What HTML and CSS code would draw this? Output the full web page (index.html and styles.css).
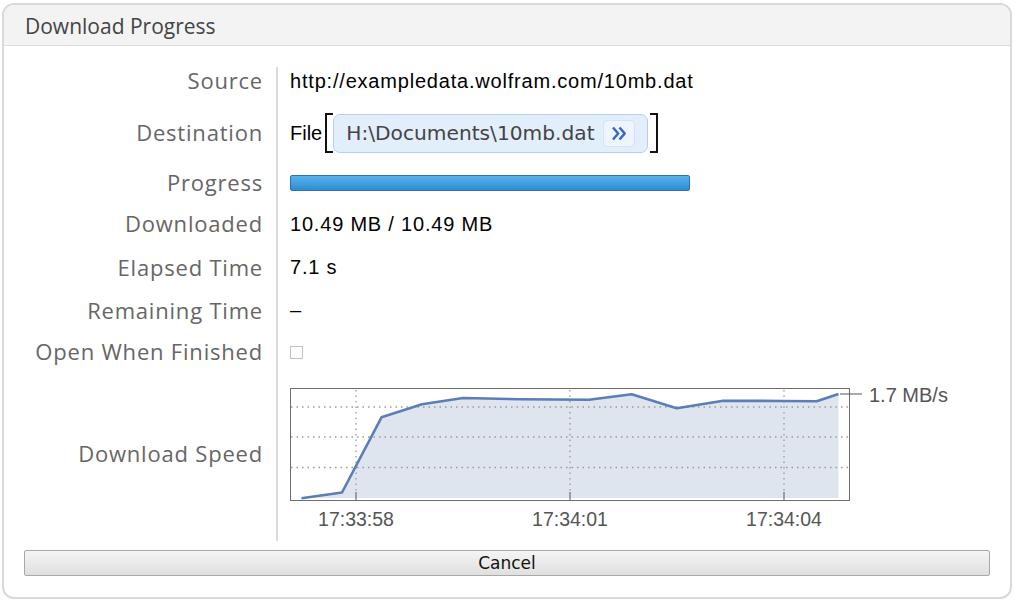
FILE: index.html
```html
<!DOCTYPE html>
<html lang="en">
<head>
  <meta charset="UTF-8" />
  <meta name="viewport" content="width=device-width, initial-scale=1.0"/>
  <title>Download Progress</title>
  <link rel="stylesheet" href="styles.css">
</head>
<body>

<div class="dialog">
  <div class="dialog-title">Download Progress</div>

  <div class="dialog-body">
    <div class="fields">
      <div class="divider"></div>

      <div class="label">Source</div>
      <div class="value">http://exampledata.wolfram.com/10mb.dat</div>

      <div class="label">Destination</div>
      <div class="value file-value">
        <span class="file-head">File</span>
        <span class="bracket bracket-open"></span>
        <span class="file-box">
          <span class="file-path">H:\Documents\10mb.dat</span>
          <span class="file-btn">
            <svg width="16" height="15" viewBox="0 0 16 15">
              <path d="M2 1.5 L7.2 7.5 L2 13.5 M8.5 1.5 L13.7 7.5 L8.5 13.5" fill="none" stroke="#3b68c6" stroke-width="2.6" stroke-linejoin="round"/>
            </svg>
          </span>
        </span>
        <span class="bracket bracket-close"></span>
      </div>

      <div class="label label-progress">Progress</div>
      <div class="value"><div class="progress-bar"></div></div>

      <div class="label">Downloaded</div>
      <div class="value">10.49 MB / 10.49 MB</div>

      <div class="label">Elapsed Time</div>
      <div class="value">7.1 s</div>

      <div class="label">Remaining Time</div>
      <div class="value">&ndash;</div>

      <div class="label">Open When Finished</div>
      <div class="value"><span class="checkbox"></span></div>

      <div class="label label-speed">Download Speed</div>
      <div class="value speed-value">
        <!-- speed history, one point per sample -->
        <svg class="speed-chart" width="680" height="170" viewBox="0 0 680 170">
          <polygon fill="#dfe5ef" points="11.5,127.3 52,121.5 91.5,46.3 132,33.3 173,27 230,28.3 299,28.8 341.7,23.3 386.7,37.3 433.3,29.7 491,30 526.7,30.3 548.5,23 548.5,127 11.5,127"/>
          <g stroke="#9a9a9a" stroke-width="1.3" stroke-dasharray="1.5 4">
            <line x1="1" y1="36" x2="559" y2="36"/>
            <line x1="1" y1="66" x2="559" y2="66"/>
            <line x1="1" y1="96.5" x2="559" y2="96.5"/>
            <line x1="66" y1="19" x2="66" y2="121"/>
            <line x1="280" y1="19" x2="280" y2="121"/>
            <line x1="494" y1="19" x2="494" y2="121"/>
          </g>
          <g stroke="#555" stroke-width="1">
            <line x1="66" y1="121" x2="66" y2="129"/>
            <line x1="280" y1="121" x2="280" y2="129"/>
            <line x1="494" y1="121" x2="494" y2="129"/>
          </g>
          <polyline fill="none" stroke="#5b7db8" stroke-width="2.6" stroke-linejoin="round" points="11.5,127.3 52,121.5 91.5,46.3 132,33.3 173,27 230,28.3 299,28.8 341.7,23.3 386.7,37.3 433.3,29.7 491,30 526.7,30.3 548.5,23"/>
          <rect x="0.5" y="17.5" width="559" height="112" fill="none" stroke="#6e6e6e" stroke-width="1"/>
          <line x1="550" y1="23" x2="572" y2="23" stroke="#555" stroke-width="1"/>
          <g class="axis-text">
            <text x="66" y="155" text-anchor="middle">17:33:58</text>
            <text x="280" y="155" text-anchor="middle">17:34:01</text>
            <text x="494" y="155" text-anchor="middle">17:34:04</text>
            <text x="579" y="31" class="rate">1.7 MB/s</text>
          </g>
        </svg>
      </div>
    </div>

    <button class="cancel-btn">Cancel</button>
  </div>
</div>

</body>
</html>
```

FILE: styles.css
```css
body {
  margin: 0;
  background: #fff;
}
.dialog {
  box-sizing: border-box;
  width: 1010px;
  height: 596px;
  margin: 3px 2px 0;
  border: 2px solid #d9d9d9;
  border-radius: 12px;
  overflow: hidden;
  display: flex;
  flex-direction: column;
}
.dialog-title {
  height: 40px;
  background: #f3f3f3;
  border-bottom: 1px solid #dcdcdc;
  padding-left: 21px;
  font-family: "Open Sans", sans-serif;
  font-size: 21px;
  line-height: 42px;
  color: #444;
}
.dialog-body {
  padding-top: 15px;
  display: flex;
  flex-direction: column;
}
.fields {
  display: grid;
  grid-template-columns: 272px 2px 1fr;
  grid-template-rows: 38px 66px 36px 44px 43px 43px 40px 170px;
}
.divider {
  grid-column: 2;
  grid-row: 1 / -1;
  margin: 6px 0 0;
  background: #dcdcdc;
}
.label {
  grid-column: 1;
  padding-right: 13px;
  text-align: right;
  align-self: center;
  font-family: "Open Sans", sans-serif;
  font-size: 22px;
  letter-spacing: 0.8px;
  color: #666;
}
.label-progress {
  margin-bottom: 3px;
}
.label-speed {
  margin-bottom: 6px;
}
.value {
  grid-column: 3;
  padding-left: 12px;
  padding-top: 2px;
  align-self: center;
  font-family: "Liberation Sans", Arial, sans-serif;
  font-size: 20px;
  letter-spacing: 0.8px;
  color: #000;
}

/* File[ path >> ] */
.file-value {
  display: flex;
  align-items: center;
}
.file-head {
  letter-spacing: 0;
  margin-right: 3px;
}
.bracket {
  box-sizing: border-box;
  width: 8px;
  height: 40px;
  border: 2px solid #111;
}
.bracket-open {
  border-right: none;
}
.bracket-close {
  border-left: none;
  margin-left: 2px;
}
.file-box {
  display: flex;
  align-items: center;
  height: 39px;
  box-sizing: border-box;
  padding: 0 12px;
  gap: 8px;
  background: #e2eefc;
  border: 1.5px solid #b9cfe9;
  border-radius: 7px;
}
.file-path {
  font-family: "DejaVu Sans", sans-serif;
  font-size: 20.2px;
  letter-spacing: 0;
  color: #444;
}
.file-btn {
  display: flex;
  align-items: center;
  justify-content: center;
  width: 32px;
  height: 27px;
  box-sizing: border-box;
  background: #eef5fe;
  border: 1px solid #d3e2f4;
  border-radius: 4px;
}

.progress-bar {
  box-sizing: border-box;
  width: 400px;
  height: 16px;
  margin-bottom: 3px;
  border: 1px solid #2f71b0;
  border-radius: 2px;
  background: linear-gradient(#5ab2ec, #2c8dd5);
}
.checkbox {
  display: block;
  box-sizing: border-box;
  width: 13px;
  height: 13px;
  border: 1px solid #c4c4c4;
  background: #fff;
}
.speed-value {
  align-self: stretch;
  padding-top: 0;
}
.speed-chart {
  display: block;
  overflow: visible;
}
.axis-text text {
  font-family: "Liberation Sans", Arial, sans-serif;
  font-size: 19.5px;
  letter-spacing: 0;
  fill: #555;
}
.axis-text .rate {
  font-size: 20px;
}

.cancel-btn {
  margin: 9px 20px 0;
  height: 26px;
  padding: 0;
  border: 1px solid #a8a8a8;
  border-radius: 2px;
  background: linear-gradient(#f5f5f5, #dfdfdf);
  font-family: "DejaVu Sans", sans-serif;
  font-size: 17px;
  color: #111;
}
```
